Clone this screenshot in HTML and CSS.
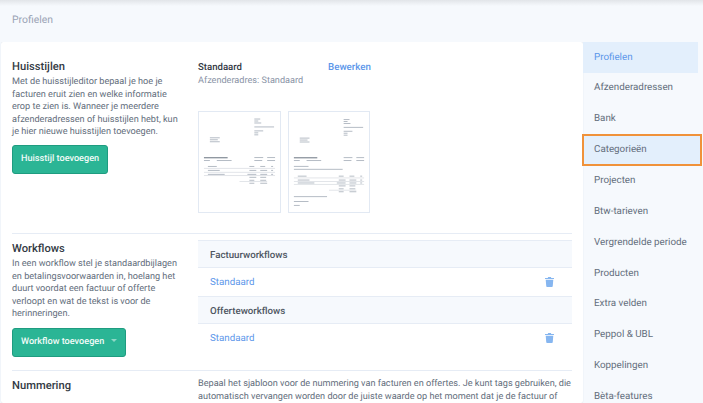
FILE: index.html
```html
<!DOCTYPE html>
<html lang="nl">
<head>
<meta charset="utf-8">
<title>Profielen</title>
<link rel="stylesheet" href="styles.css">
</head>
<body>
<div class="topbar"></div>
<header class="page-head">Profielen</header>
<div class="layout">
  <main class="card">
    <section class="section section-styles">
      <div class="info">
        <h2>Huisstijlen</h2>
        <p>Met de huisstijleditor bepaal je hoe je facturen eruit zien en welke informatie erop te zien is. Wanneer je meerdere afzenderadressen of huisstijlen hebt, kun je hier nieuwe huisstijlen toevoegen.</p>
        <button class="btn">Huisstijl toevoegen</button>
      </div>
      <div class="detail">
        <div class="style-head">
          <div class="style-name">
            <strong>Standaard</strong>
            <span>Afzenderadres: Standaard</span>
          </div>
          <a class="link edit">Bewerken</a>
        </div>
        <div class="thumbs">
          <svg class="thumb" viewBox="0 0 82 100">
            <g fill="#b4bbc4">
              <rect x="56" y="6" width="6" height="1"/><rect x="56" y="8" width="4" height="1"/><rect x="56" y="10" width="7" height="1"/>
              <rect x="56" y="14" width="20" height="1"/><rect x="56" y="18" width="9" height="1"/><rect x="56" y="20" width="4" height="1"/><rect x="56" y="22" width="4" height="1"/>
              <rect x="11" y="25" width="10" height="1"/><rect x="11" y="27" width="8" height="1"/><rect x="11" y="29" width="10" height="1"/>
              <rect x="5" y="45" width="24" height="1.3" fill="#8a929c"/><rect x="5" y="48" width="6" height="1"/><rect x="18" y="48" width="15" height="1"/>
              <rect x="56" y="45" width="9" height="1"/><rect x="69" y="45" width="8" height="1"/><rect x="56" y="48" width="8" height="1"/><rect x="69" y="48" width="8" height="1"/>
              <rect x="9" y="54" width="9" height="1"/><rect x="51" y="54" width="5" height="1"/><rect x="62" y="54" width="5" height="1"/><rect x="73" y="54" width="2" height="1"/>
              <rect x="9" y="58" width="12" height="1"/><rect x="51" y="58" width="7" height="1"/><rect x="62" y="58" width="7" height="1"/><rect x="73" y="58" width="2" height="1"/>
              <rect x="9" y="62" width="17" height="1"/><rect x="49" y="62" width="9" height="1"/><rect x="62" y="62" width="7" height="1"/><rect x="73" y="62" width="2" height="1"/>
              <rect x="51" y="65" width="7" height="1"/><rect x="62" y="65" width="6" height="1"/><rect x="51" y="68" width="5" height="1"/><rect x="62" y="68" width="6" height="1"/>
              <rect x="51" y="71" width="5" height="1"/><rect x="62" y="71" width="7" height="1"/>
            </g>
            <g fill="#d5d9df">
              <rect x="5" y="56" width="72" height="0.7"/><rect x="5" y="60" width="72" height="0.7"/><rect x="5" y="63.500" width="72" height="0.7"/><rect x="41" y="69.500" width="28" height="0.7"/>
            </g>
          </svg>
          <svg class="thumb" viewBox="0 0 82 100">
            <g fill="#b4bbc4">
              <rect x="56" y="6" width="6" height="1"/><rect x="56" y="8" width="4" height="1"/><rect x="56" y="10" width="7" height="1"/>
              <rect x="56" y="14" width="20" height="1"/><rect x="56" y="18" width="9" height="1"/><rect x="56" y="20" width="4" height="1"/><rect x="56" y="22" width="4" height="1"/>
              <rect x="11" y="25" width="10" height="1"/><rect x="11" y="27" width="8" height="1"/><rect x="11" y="29" width="10" height="1"/>
              <rect x="5" y="45" width="24" height="1.3" fill="#8a929c"/><rect x="5" y="48" width="6" height="1"/><rect x="18" y="48" width="15" height="1"/>
              <rect x="56" y="45" width="9" height="1"/><rect x="69" y="45" width="8" height="1"/><rect x="56" y="48" width="8" height="1"/><rect x="69" y="48" width="8" height="1"/>
              <rect x="5" y="54" width="15" height="1"/><rect x="5" y="57" width="50" height="1"/>
              <rect x="9" y="64" width="9" height="1"/><rect x="51" y="64" width="5" height="1"/><rect x="62" y="64" width="5" height="1"/><rect x="73" y="64" width="2" height="1"/>
              <rect x="9" y="68" width="12" height="1"/><rect x="51" y="68" width="7" height="1"/><rect x="62" y="68" width="7" height="1"/><rect x="73" y="68" width="2" height="1"/>
              <rect x="9" y="71" width="17" height="1"/><rect x="49" y="71" width="9" height="1"/><rect x="62" y="71" width="7" height="1"/><rect x="73" y="71" width="2" height="1"/>
              <rect x="51" y="74" width="7" height="1"/><rect x="62" y="74" width="6" height="1"/><rect x="51" y="77" width="5" height="1"/><rect x="62" y="77" width="6" height="1"/>
              <rect x="51" y="80" width="5" height="1"/><rect x="62" y="80" width="7" height="1"/>
              <rect x="5" y="85" width="34" height="1"/><rect x="5" y="90" width="15" height="1"/><rect x="5" y="94" width="6" height="1"/>
            </g>
            <g fill="#d5d9df">
              <rect x="5" y="66" width="72" height="0.7"/><rect x="5" y="69.500" width="72" height="0.7"/><rect x="5" y="72.500" width="72" height="0.7"/><rect x="41" y="78.500" width="28" height="0.7"/>
            </g>
          </svg>
        </div>
      </div>
    </section>
    <section class="section section-flows">
      <div class="info">
        <h2>Workflows</h2>
        <p>In een workflow stel je standaardbijlagen en betalingsvoorwaarden in, hoelang het duurt voordat een factuur of offerte verloopt en wat de tekst is voor de herinneringen.</p>
        <button class="btn">Workflow toevoegen <span class="caret"></span></button>
      </div>
      <div class="detail">
        <div class="flow-head">Factuurworkflows</div>
        <div class="flow-row"><a class="link">Standaard</a>
          <svg class="trash" viewBox="0 0 10 11"><path d="M3.500 0h3l.5 1h3v1.200H0V1h3zM.8 3h8.400l-.6 7.200c0 .5-.4.8-.9.8H2.300c-.5 0-.9-.3-.9-.8z"/></svg></div>
        <div class="flow-head">Offerteworkflows</div>
        <div class="flow-row"><a class="link">Standaard</a>
          <svg class="trash" viewBox="0 0 10 11"><path d="M3.500 0h3l.5 1h3v1.200H0V1h3zM.8 3h8.400l-.6 7.200c0 .5-.4.8-.9.8H2.300c-.5 0-.9-.3-.9-.8z"/></svg></div>
      </div>
    </section>
    <section class="section section-numbers">
      <div class="info">
        <h2>Nummering</h2>
      </div>
      <div class="detail">
        <p>Bepaal het sjabloon voor de nummering van facturen en offertes. Je kunt tags gebruiken, die automatisch vervangen worden door de juiste waarde op het moment dat je de factuur of</p>
      </div>
    </section>
  </main>
  <nav class="side">
    <a class="item active">Profielen</a>
    <a class="item">Afzenderadressen</a>
    <a class="item">Bank</a>
    <a class="item focus">Categorieën</a>
    <a class="item">Projecten</a>
    <a class="item">Btw-tarieven</a>
    <a class="item">Vergrendelde periode</a>
    <a class="item">Producten</a>
    <a class="item">Extra velden</a>
    <a class="item">Peppol &amp; UBL</a>
    <a class="item">Koppelingen</a>
    <a class="item">Bèta-features</a>
  </nav>
</div>
</body>
</html>
```
FILE: styles.css
```css
* { box-sizing: border-box; }
body {
  margin: 0;
  height: 403px;
  overflow: hidden;
  background: #f6f9fd;
  font-family: Roboto, "Liberation Sans", sans-serif;
  font-size: 9.15px;
  line-height: 12.6px;
  color: #636e7c;
  text-rendering: geometricPrecision;
}
.topbar {
  height: 6px;
  background: linear-gradient(#e2e5e9, #f6f9fd);
}
.page-head {
  height: 36px;
  padding: 8px 0 0 12px;
  font-size: 10.4px;
  color: #9aa3b5;
}
.layout { display: flex; align-items: flex-start; height: 361px; overflow: hidden; }
.card {
  flex: none;
  width: 582px;
  height: 361px;
  margin-left: 1px;
  padding: 0 11px;
  background: #fff;
  border-radius: 2px;
  box-shadow: 0 0 1px #ccd4de;
}
.section {
  display: flex;
  border-bottom: 1px solid #e6ecf5;
}
.section-styles { height: 192px; padding-top: 18px; }
.section-flows { height: 137px; padding-top: 6px; }
.section-numbers { border-bottom: 0; padding-top: 7px; }
.info { width: 186px; flex: none; }
.section-flows .info { padding-top: 2px; }
.info h2 {
  margin: 0;
  font-size: 11.2px;
  line-height: 14px;
  font-weight: 500;
  color: #333a44;
}
.section-numbers h2 { margin-top: 1px; }
.info p, .detail p { margin: 0; }
.info p { width: 172px; margin-top: 2px; }
.btn {
  display: block;
  margin-top: 6px;
  height: 29px;
  padding: 0 8px;
  border: 1px solid #1f9c80;
  border-radius: 3px;
  background: #2bb595;
  color: #f1fbf8;
  font: 500 9.15px/12px Roboto, "Liberation Sans", sans-serif;
  text-rendering: geometricPrecision;
}
.section-flows .btn { margin-top: 7px; }
.caret {
  display: inline-block;
  margin: 0 0 2px 4px;
  border: 3px solid transparent;
  border-top-color: #8fd8c6;
  border-bottom: 0;
}
.detail { flex: 1; min-width: 0; }
.style-head { display: flex; height: 51px; padding-top: 1px; }
.style-name { width: 130px; display: flex; flex-direction: column; }
.style-name strong { font-size: 9.6px; font-weight: 500; color: #333a44; line-height: 14px; }
.style-name span { color: #8a94a6; line-height: 13px; }
.link { color: #5b96ea; font-size: 9.75px; }
.edit { font-weight: 500; line-height: 14px; }
.thumbs { display: flex; gap: 7px; }
.thumb {
  width: 83px;
  height: 102px;
  border: 1px solid #e2e9f3;
  background: #fff;
}
.thumb + .thumb { width: 82px; }
.thumb g { filter: blur(.3px); }
.flow-head {
  height: 28px;
  padding: 9px 12px 0;
  background: #f6f9fd;
  border-top: 1px solid #e6ecf5;
  border-bottom: 1px solid #e6ecf5;
  font-size: 9.7px;
  font-weight: 500;
  color: #4d5561;
}
.flow-row {
  display: flex;
  justify-content: space-between;
  align-items: center;
  height: 28px;
  padding: 0 18px 0 12px;
}
.flow-row .link { padding-top: 2px; }
.trash { width: 9px; height: 10px; fill: #86b6f0; }
.side { width: 120px; flex: none; font-size: 9.8px; }
.item {
  display: flex;
  align-items: center;
  width: 115px;
  height: 30.85px;
  padding: 1px 0 0 11px;
  color: #636e7c;
}
.active { background: #e3effc; color: #5b96ea; }
.focus {
  background: #e3effc;
  outline: 2px solid #f0923a;
  outline-offset: -1px;
  width: 118px;
}
```
